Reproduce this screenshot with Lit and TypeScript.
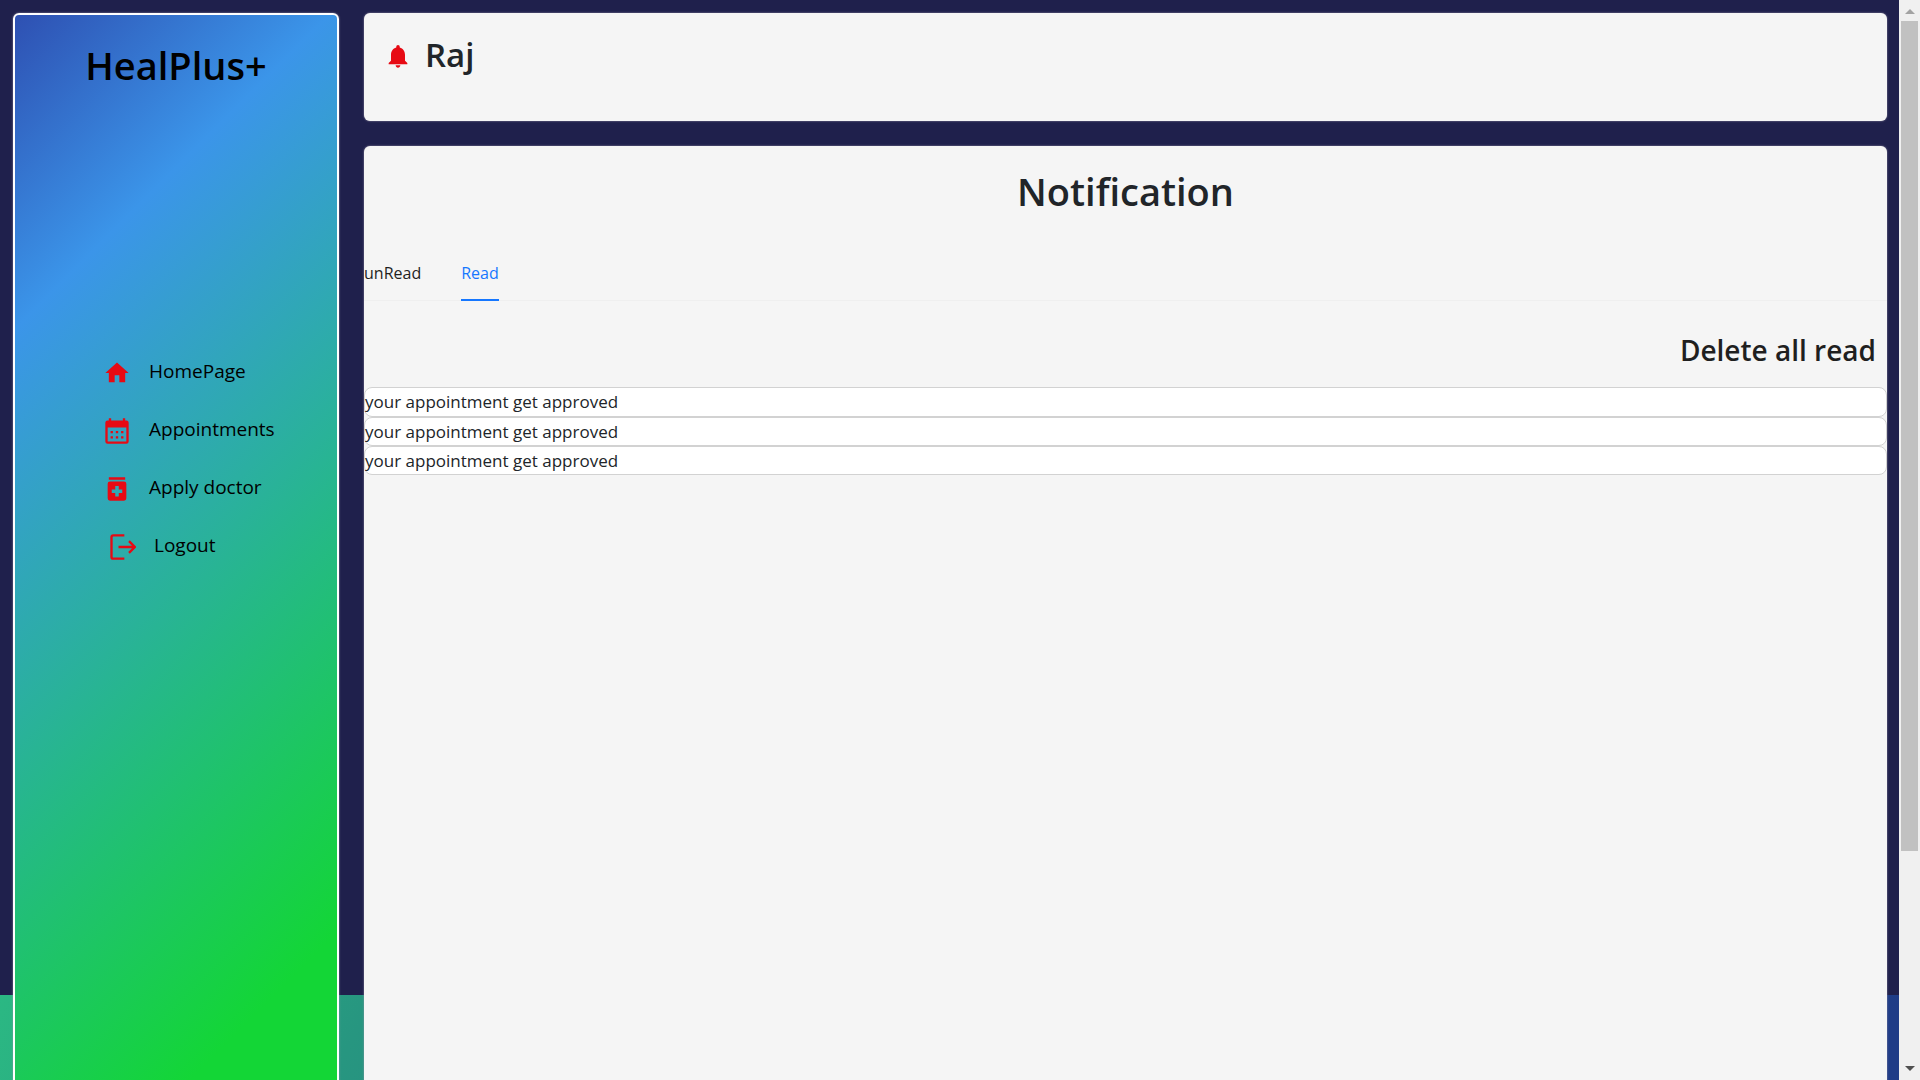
import { LitElement, html, css, svg } from "lit";
import { customElement, state } from "lit/decorators.js";

const icons = {
  home: svg`<path d="M10 20v-6h4v6h5v-8h3L12 3 2 12h3v8z"/>`,
  calendar: svg`<path fill-rule="evenodd" d="M5 1h2v2h10V1h2v2h1a2 2 0 0 1 2 2v16a2 2 0 0 1-2 2H4a2 2 0 0 1-2-2V5a2 2 0 0 1 2-2h1zM4 9v12h16V9zm2.500 3h2v2h-2zm4.500 0h2v2h-2zm4.500 0h2v2h-2zM6.500 16.500h2v2h-2zm4.500 0h2v2h-2zm4.500 0h2v2h-2z"/>`,
  medicine: svg`<path fill-rule="evenodd" d="M5 2h14v2H5zM6 5.500h12a2 2 0 0 1 2 2v12.500a2 2 0 0 1-2 2H6a2 2 0 0 1-2-2V7.500a2 2 0 0 1 2-2zm4.500 4v3h-3v3h3v3h3v-3h3v-3h-3v-3z"/>`,
  logout: svg`<path fill="none" stroke="currentColor" stroke-width="2" d="M14 2H4.500A1.500 1.500 0 0 0 3 3.500v17A1.500 1.500 0 0 0 4.500 22H14M9 12h14M18 7l5 5-5 5"/>`,
  bell: svg`<path d="M12 22c1.100 0 2-.9 2-2h-4c0 1.100.9 2 2 2zm6-6v-5c0-3.070-1.640-5.640-4.500-6.320V4a1.500 1.500 0 0 0-3 0v.68C7.630 5.360 6 7.920 6 11v5l-2 2v1h16v-1z"/>`,
};

type IconName = keyof typeof icons;

const links: { icon: IconName; label: string; href: string }[] = [
  { icon: "home", label: "HomePage", href: "#home" },
  { icon: "calendar", label: "Appointments", href: "#appointments" },
  { icon: "medicine", label: "Apply doctor", href: "#apply-doctor" },
  { icon: "logout", label: "Logout", href: "#logout" },
];

@customElement("app-root")
export class AppRoot extends LitElement {
  static styles = css`
    :host {
      display: flex;
      height: 100vh;
      overflow: hidden;
      font-family: "Segoe UI", "Open Sans", "Noto Sans", sans-serif;
      font-size: 17px;
      line-height: 28px;
      color: #212529;
    }
    * {
      box-sizing: border-box;
    }
    h1, h2, ul {
      margin: 0;
      padding: 0;
    }
    ul {
      list-style: none;
    }
    .page {
      flex: 1;
      min-width: 0;
      height: 126vh;
      padding: 13px 12px 13px 13px;
      display: flex;
      gap: 25px;
      background:
        linear-gradient(#1f204c, #1f204c) top / 100% 995px no-repeat,
        linear-gradient(115deg, #2bb883 0%, #279680 18%, #1f3c87 92%) left 995px / 100% 366px no-repeat;
    }
    .sidebar {
      flex: none;
      width: 326px;
      border: 2px solid #fff;
      border-radius: 6px;
      box-shadow: 0 0 2px #9b94a8;
      color: #000;
      background: linear-gradient(135deg, #2e50b2 0%, #3b95e9 19%, #13d636 75%);
      display: flex;
      flex-direction: column;
      gap: 268px;
    }
    .brand {
      padding-top: 26px;
      text-align: center;
      font-size: 38px;
      line-height: 48px;
      font-weight: 600;
    }
    .menu {
      display: flex;
      flex-direction: column;
      gap: 30px;
      padding-left: 88px;
      font-size: 19px;
    }
    .menu-link {
      display: flex;
      align-items: center;
      gap: 18px;
      color: inherit;
      text-decoration: none;
    }
    .menu-item:last-child {
      padding-left: 5px;
    }
    .icon {
      flex: none;
      width: 28px;
      height: 28px;
      fill: currentColor;
      color: #e70a14;
    }
    .menu .icon {
      margin: 2px 0 -2px;
    }
    .content {
      flex: 1;
      min-width: 0;
      display: flex;
      flex-direction: column;
      gap: 25px;
    }
    .card {
      background: #f5f5f5;
      border-radius: 6px;
      box-shadow: 0 0 2px #9b94a8;
    }
    .header {
      display: flex;
      align-items: flex-start;
      gap: 13px;
      padding: 22px 20px 46px;
    }
    .header .icon {
      margin-top: 7px;
    }
    .user {
      font-size: 33px;
      line-height: 40px;
      font-weight: 600;
    }
    .notifications {
      flex: 1;
      padding-top: 21px;
    }
    .title {
      text-align: center;
      font-size: 38px;
      line-height: 48px;
      font-weight: 600;
    }
    .tabs {
      display: flex;
      gap: 40px;
      margin-top: 38px;
      border-bottom: 1px solid #efefef;
    }
    button {
      font: inherit;
      color: #1f1f1f;
      background: none;
      border: 0;
      padding: 0;
      cursor: pointer;
    }
    .tab {
      padding: 6px 0 12px;
      font-size: 16px;
      border-bottom: 2px solid transparent;
      margin-bottom: -1px;
    }
    .tab-active {
      color: #1677ff;
      border-color: #1677ff;
    }
    .actions {
      display: flex;
      justify-content: flex-end;
      padding: 29px 11px 17px;
    }
    .delete {
      font-size: 28px;
      line-height: 40px;
      font-weight: 600;
    }
    .notice {
      background: #fff;
      border: 1px solid #d2d2d2;
      border-radius: 8px;
      line-height: 28px;
    }
    .notice + .notice {
      line-height: 27px;
    }
    .scrollbar {
      flex: none;
      width: 21px;
      padding: 9px 2px 9px;
      display: flex;
      flex-direction: column;
      align-items: center;
      background: #f0f0f0;
    }
    .arrow {
      width: 10px;
      height: 5px;
      fill: #a3a3a3;
    }
    .arrow-down {
      fill: #505050;
    }
    .track {
      flex: 1;
      align-self: stretch;
      padding: 7px 0;
    }
    .thumb {
      height: 80%;
      background: #c1c1c1;
    }
  `;

  @state() private tab = "Read";

  private icon(name: IconName) {
    return html`<svg class="icon" viewBox="0 0 24 24" aria-hidden="true">${icons[name]}</svg>`;
  }

  render() {
    return html`
      <div class="page">
        <nav class="sidebar">
          <h1 class="brand">HealPlus+</h1>
          <ul class="menu">
            ${links.map(
              (l) => html`<li class="menu-item">
                <a class="menu-link" href=${l.href}>${this.icon(l.icon)}<span>${l.label}</span></a>
              </li>`
            )}
          </ul>
        </nav>
        <main class="content">
          <header class="card header">
            ${this.icon("bell")}
            <h2 class="user">Raj</h2>
          </header>
          <section class="card notifications">
            <h1 class="title">Notification</h1>
            <div class="tabs" role="tablist">
              ${["unRead", "Read"].map(
                (t) => html`<button
                  class="tab ${this.tab === t ? "tab-active" : ""}"
                  role="tab"
                  aria-selected=${this.tab === t}
                  @click=${() => (this.tab = t)}
                >${t}</button>`
              )}
            </div>
            <div class="actions"><button class="delete">Delete all read</button></div>
            <ul>
              ${[1, 2, 3].map(() => html`<li class="notice">your appointment get approved</li>`)}
            </ul>
          </section>
        </main>
      </div>
      <div class="scrollbar" aria-hidden="true">
        <svg class="arrow" viewBox="0 0 10 5"><path d="M0 5L5 0L10 5z"/></svg>
        <div class="track"><div class="thumb"></div></div>
        <svg class="arrow arrow-down" viewBox="0 0 10 5"><path d="M0 0L5 5L10 0z"/></svg>
      </div>
    `;
  }
}
